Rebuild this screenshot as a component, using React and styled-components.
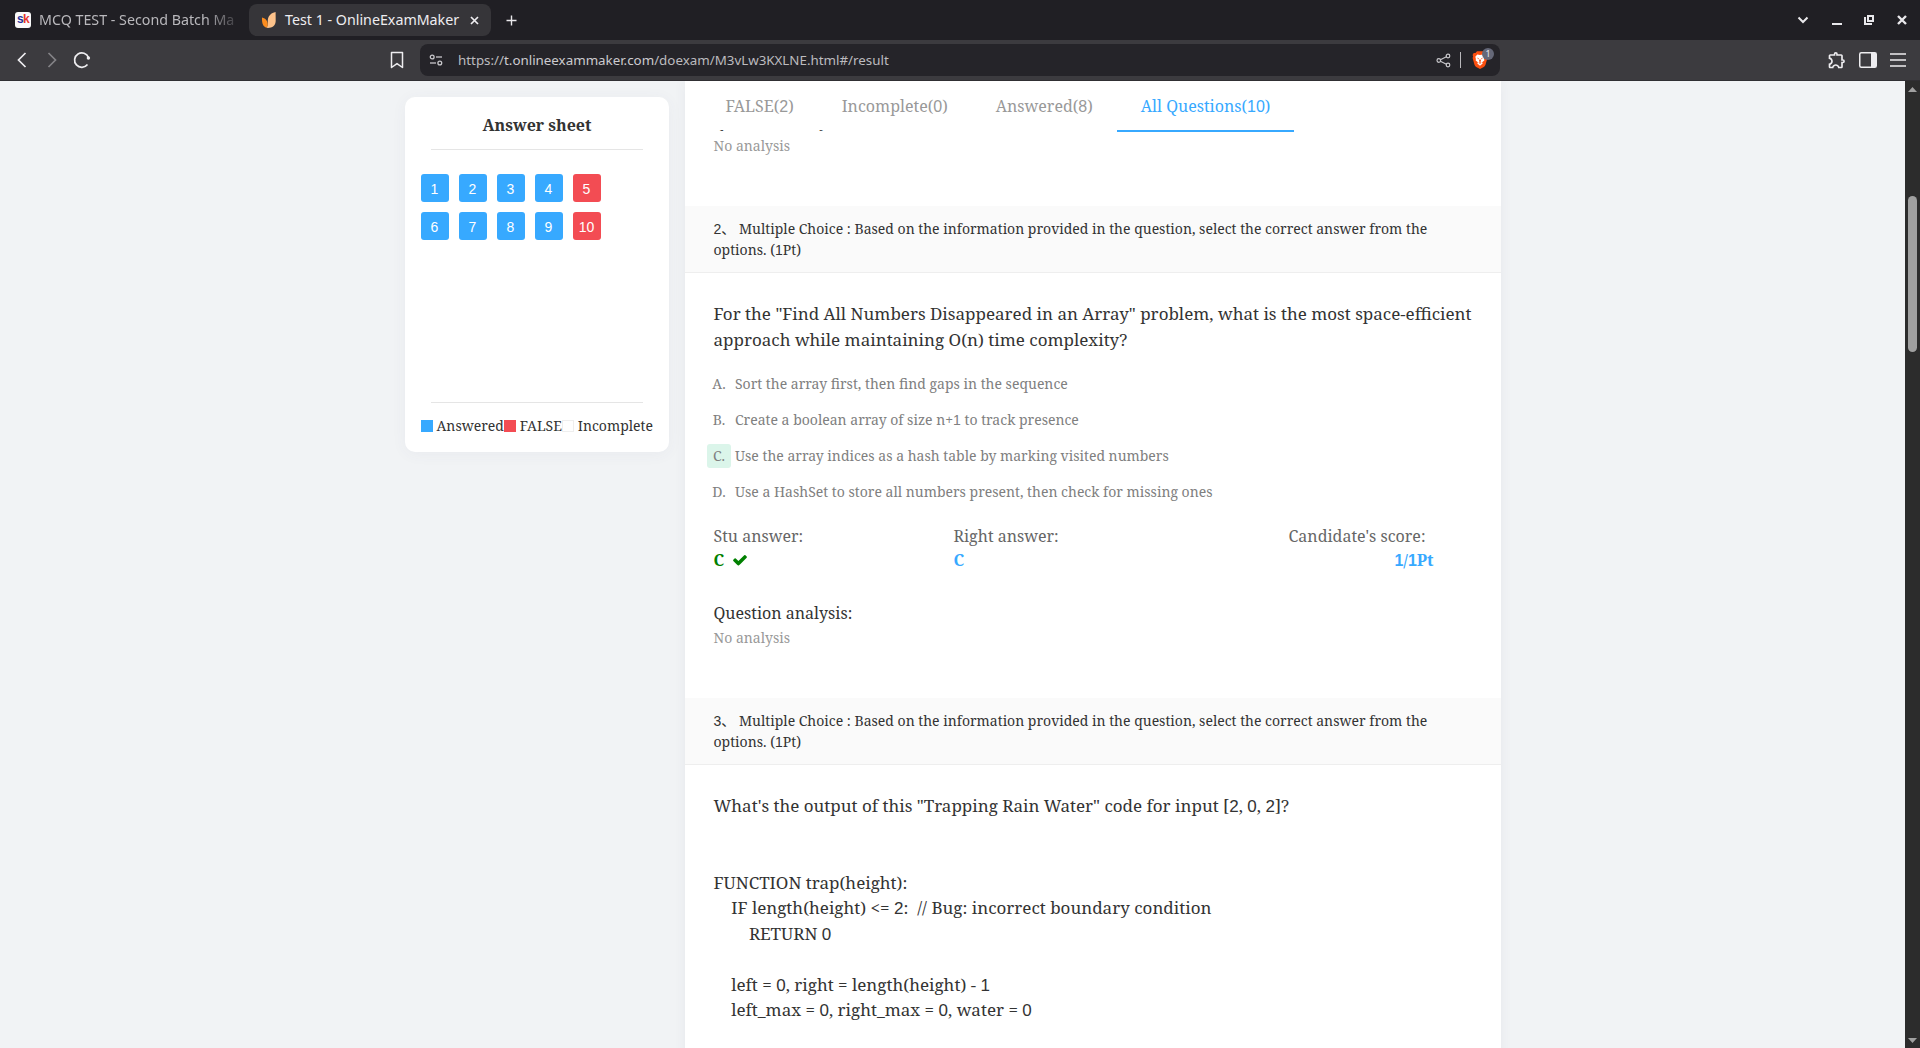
import React from 'react';
import styled, { createGlobalStyle, css } from 'styled-components';
import { MdOutlineExtension } from 'react-icons/md';

const SERIF = '"Noto Serif", "Noto Sans CJK SC", serif';
const UI = '"Noto Sans", sans-serif';
const BLUE = '#37a9ff';
const RED = '#f34c53';
const PAGE = '#f1f3f5';

const GlobalStyle = createGlobalStyle`
  *, *::before, *::after { box-sizing: border-box; }
  body { margin: 0; background: ${PAGE}; overflow: hidden; }
  svg { display: block; flex: none; }
`;

/* ---------- browser chrome ---------- */
const Window = styled.div`
  width: 1920px;
  height: 1048px;
  display: flex;
  flex-direction: column;
  overflow: hidden;
`;

const TabStrip = styled.div`
  height: 40px;
  flex: none;
  display: flex;
  align-items: center;
  background: #201f24;
  color: #e9e8ec;
  padding: 0 1px 0 7px;
`;

const BrowserTab = styled.div`
  width: 242px;
  height: 32px;
  display: flex;
  align-items: center;
  border-radius: 8px;
  font: 14.25px/20px ${UI};
  color: ${(p) => (p.$active ? '#eeedf0' : '#b9b8bc')};
  background: ${(p) => (p.$active ? '#363539' : 'transparent')};
  padding: ${(p) => (p.$active ? '0 12px 0 12px' : '0 12px 0 8px')};
`;

const TabTitle = styled.span`
  flex: 1;
  margin: -1px 0 0 8px;
  white-space: nowrap;
  ${(p) =>
    p.$fade &&
    css`
      mask-image: linear-gradient(to right, #000 166px, rgba(0, 0, 0, 0.1) 200px);
    `}
`;

const SkIcon = styled.span`
  width: 16px;
  height: 16px;
  border-radius: 3px;
  background: #fafafa;
  color: #27309b;
  font: 700 12px/15px "Liberation Sans", sans-serif;
  letter-spacing: -0.6px;
  text-align: center;
  b { color: #e8352c; }
`;

const NewTab = styled.span`
  margin-left: 15px;
`;

const WindowButtons = styled.div`
  margin-left: auto;
  display: flex;
  align-items: center;
  padding-bottom: 1px;
`;

const WinButton = styled.span`
  width: ${(p) => p.$w}px;
  display: flex;
  justify-content: center;
`;

const Toolbar = styled.div`
  height: 41px;
  flex: none;
  display: flex;
  align-items: center;
  background: #3c3b3f;
  border-bottom: 1px solid #302f33;
  color: #eeedf0;
  padding: 0 13px 0 12px;
`;

const NavButton = styled.span`
  width: 20px;
  margin-right: 10px;
  display: flex;
  justify-content: center;
  opacity: ${(p) => (p.$off ? 0.4 : 1)};
`;

const BookmarkButton = styled.span`
  width: 20px;
  display: flex;
  justify-content: center;
  margin-left: 285px;
`;

const AddressBar = styled.div`
  width: 1080px;
  height: 32px;
  margin-left: 13px;
  display: flex;
  align-items: center;
  border-radius: 8px;
  background: #252429;
  padding: 0 11px 0 9px;
  color: #c9c8cc;
`;

const Url = styled.span`
  flex: 1;
  margin-left: 15px;
  font: 13.35px ${UI};
  color: #bcbbbf;
  b { font-weight: 400; color: #cccbcf; }
`;

const Divider = styled.i`
  width: 1px;
  height: 16px;
  margin: 0 10px 0 9px;
  background: #b9b8bc;
`;

const Shield = styled.span`
  position: relative;
  display: flex;
  width: 18px;
  height: 20px;
  align-items: center;
  justify-content: center;
`;

const Badge = styled.span`
  position: absolute;
  left: 11px;
  top: -2px;
  width: 12px;
  height: 12px;
  border-radius: 6px;
  background: #656878;
  color: #e6e6ec;
  font: 9px/12px ${UI};
  text-align: center;
`;

const ToolbarEnd = styled.div`
  margin-left: auto;
  display: flex;
  align-items: center;
  gap: 12px;
`;

/* ---------- page ---------- */
const Viewport = styled.div`
  flex: 1;
  min-height: 0;
  display: flex;
  overflow: hidden;
  background: ${PAGE};
  color: #333;
  font-family: ${SERIF};
`;

const Content = styled.div`
  flex: 1;
  display: flex;
  align-items: flex-start;
  gap: 16px;
  padding-left: 405px;
  min-width: 0;
`;

const Sheet = styled.aside`
  width: 264px;
  height: 355px;
  margin-top: 16px;
  padding: 16px 16px 10px;
  display: flex;
  flex-direction: column;
  border-radius: 10px;
  background: #fff;
  box-shadow: 0 2px 15px rgba(70, 70, 110, 0.05);
`;

const SheetTitle = styled.h2`
  margin: 0 10px;
  height: 37px;
  border-bottom: 1px solid #e5e5e5;
  font-size: 16px;
  font-weight: 700;
  line-height: 24px;
  text-align: center;
`;

const NumberGrid = styled.div`
  flex: 1;
  display: grid;
  grid-template-columns: repeat(6, 28px);
  grid-auto-rows: 28px;
  gap: 10px;
  padding-top: 24px;
`;

const NumberBox = styled.span`
  padding-right: 1px;
  border-radius: 3px;
  background: ${(p) => (p.$wrong ? RED : BLUE)};
  color: #fff;
  font-size: 14px;
  line-height: 29px;
  text-align: center;
`;

const Legend = styled.div`
  display: flex;
  justify-content: space-between;
  height: 40px;
  margin-bottom: -1px;
  padding-top: 12px;
  font-size: 14px;
  line-height: 22px;
`;

const LegendRule = styled.div`
  height: 1px;
  margin: 0 10px;
  background: #e5e5e5;
`;

const LegendItem = styled.span`
  display: flex;
  align-items: center;
  gap: 3.5px;
  white-space: nowrap;
  height: 22px;
  &::before {
    content: '';
    width: 12px;
    height: 12px;
    background: ${(p) => p.$color};
    border: ${(p) => (p.$outlined ? '1px solid #eee' : '0')};
  }
`;

const Paper = styled.main`
  width: 816px;
  min-height: 100%;
  padding-bottom: 24px;
  background: #fff;
  box-shadow: 0 0 12px rgba(70, 70, 110, 0.06);
`;

const FilterBar = styled.nav`
  position: relative;
  z-index: 1;
  height: 49px;
  display: flex;
  padding-left: 16.5px;
  background: #fff;
`;

const Filter = styled.span`
  height: 51px;
  padding: 13px 24px 0;
  font-size: 16px;
  line-height: 24px;
  color: ${(p) => (p.$active ? BLUE : '#999')};
  border-bottom: 2px solid ${(p) => (p.$active ? BLUE : 'transparent')};
`;

const Analysis = styled.div`
  height: 97px;
  padding-left: 28.5px;
  margin-top: ${(p) => p.$tuck || 0}px;
`;

const AnalysisTitle = styled.div`
  font-size: 16px;
  line-height: 24px;
`;

const AnalysisText = styled.div`
  margin-top: 2px;
  font-size: 14px;
  line-height: 21px;
  color: #999;
`;

const QuestionHead = styled.div`
  height: 67px;
  padding: 12px 28.5px;
  background: #fafafa;
  border-bottom: 1px solid #eee;
  font-size: 14px;
  line-height: 21px;
`;

const Stem = styled.div`
  margin: 28px 20px 20px 28.5px;
  font-size: 17px;
  line-height: 25.5px;
  white-space: pre-wrap;
`;

const Options = styled.div`
  display: flex;
  flex-direction: column;
  gap: 12px;
  padding-left: 22px;
`;

const Option = styled.div`
  display: flex;
  gap: 4px;
  font-size: 14px;
  line-height: 24px;
  color: #808080;
`;

const Letter = styled.span`
  width: 24px;
  height: 24px;
  border-radius: 3px;
  text-align: center;
  background: ${(p) => (p.$picked ? '#dbf5ea' : 'transparent')};
`;

const Results = styled.div`
  display: grid;
  grid-template-columns: repeat(3, 240px);
  padding: 19.5px 0 0 28.5px;
  height: 97px;
`;

const Result = styled.div`
  font-size: 16px;
  line-height: 24px;
  color: #666;
  text-align: ${(p) => (p.$end ? 'right' : 'left')};
`;

const ResultLabel = styled.div`
  padding-right: 8px;
`;

const ResultValue = styled.div`
  display: ${(p) => (p.$flex ? 'flex' : 'block')};
  align-items: center;
  gap: 8px;
  font-weight: 700;
  color: ${(p) => p.$color};
`;

const Digits = styled.span`
  font-family: 'Liberation Sans', sans-serif;
  line-height: 1;
`;

const ScrollTrack = styled.div`
  width: 15px;
  flex: none;
  display: flex;
  flex-direction: column;
  align-items: center;
  padding: 6px 0 5px;
  background: #2c2c2c;
`;

const ScrollThumb = styled.div`
  width: 9px;
  height: 156px;
  margin-top: 104px;
  margin-bottom: auto;
  border-radius: 4.5px;
  background: #a0a0a0;
`;

/* Sets every run of digits in the sans-serif numeral face. */
const T = ({ children }) =>
  String(children)
    .split(/(\d+)/)
    .map((part, i) => (i % 2 ? <Digits key={i}>{part}</Digits> : part));

const Stroke = ({ w = 16, h = w, sw = 1.5, children }) => (
  <svg width={w} height={h} viewBox={`0 0 ${w} ${h}`} fill="none" stroke="currentColor" strokeWidth={sw}>
    {children}
  </svg>
);

const Check = () => (
  <svg width="16" height="16" viewBox="0 0 1792 1792" fill="green">
    <path d="M1671 566q0 40-28 68l-724 724-136 136q-28 28-68 28t-68-28l-136-136-362-362q-28-28-28-68t28-68l136-136q28-28 68-28t68 28l294 295 656-657q28-28 68-28t68 28l136 136q28 28 28 68z" />
  </svg>
);

const Lion = () => (
  <svg width="16" height="18" viewBox="0 0 16 18">
    <path d="M5 .3h6l1.600 1.700 1.700-.1L15.400 4l-.5 1.500.5 1.500-1.900 6.800c-.3 1-.9 1.600-1.700 2.200L8 18l-3.800-2c-.8-.6-1.400-1.200-1.700-2.200L.6 7l.5-1.500L.6 4l1.100-2.100 1.700.1z" fill="#fb4f10" />
    <path d="M5.300 3.400L8 3.900l2.700-.5 2 2.300-.6 2.200.2 1.600-2.200 1.700.6 1.200L8 14.800l-2.700-2.400.6-1.200-2.200-1.700.2-1.600-.6-2.200z" fill="#fff" />
    <path d="M4.700 6.600l2 .7.100 1.100zM11.300 6.600l-2 .7-.1 1.100zM7.300 8.600h1.400l.3 1.700-1 .6-1-.6zM6.300 11.800L8 11.200l1.700.6L8 12.700z" fill="#fb4f10" />
  </svg>
);

const HEAD = 'Multiple Choice : Based on the information provided in the question, select the correct answer from the options. (1Pt)';

const OPTIONS = [
  ['A', 'Sort the array first, then find gaps in the sequence'],
  ['B', 'Create a boolean array of size n+1 to track presence'],
  ['C', 'Use the array indices as a hash table by marking visited numbers'],
  ['D', 'Use a HashSet to store all numbers present, then check for missing ones'],
];

const CODE = `What's the output of this "Trapping Rain Water" code for input [2, 0, 2]?


FUNCTION trap(height):
    IF length(height) <= 2:  // Bug: incorrect boundary condition
        RETURN 0

    left = 0, right = length(height) - 1
    left_max = 0, right_max = 0, water = 0`;

const FILTERS = ['FALSE(2)', 'Incomplete(0)', 'Answered(8)', 'All Questions(10)'];

const Head = ({ n }) => (
  <QuestionHead>
    <T>{`${n}、 ${HEAD}`}</T>
  </QuestionHead>
);

const AnalysisBlock = ({ tuck }) => (
  <Analysis $tuck={tuck}>
    <AnalysisTitle>Question analysis:</AnalysisTitle>
    <AnalysisText>No analysis</AnalysisText>
  </Analysis>
);

const Chrome = () => (
  <>
    <TabStrip>
      <BrowserTab>
        <SkIcon>s<b>k</b></SkIcon>
        <TabTitle $fade>MCQ TEST - Second Batch Ma</TabTitle>
      </BrowserTab>
      <BrowserTab $active>
        <svg width="16" height="16" viewBox="0 0 16 16">
          <path d="M14.600 0C10 1 6.400 4 6.800 10c.1 2.500-.3 4.500-1.300 5.800 5 .6 9.100-1.800 9.200-6.800z" fill="#fdc28a" />
          <path d="M1 5.500c4 1 6 4 5.700 7.200-.1 1.300-.5 2.300-1.200 3.100C2.300 14.800.7 11.500 1 5.500z" fill="#fb8c1e" />
        </svg>
        <TabTitle>Test 1 - OnlineExamMaker</TabTitle>
        <Stroke w={9} sw={1.7}><path d="M1 1l7 7M8 1l-7 7" /></Stroke>
      </BrowserTab>
      <NewTab><Stroke w={11} sw={1.4}><path d="M5.500 .5v10M.5 5.500h10" /></Stroke></NewTab>
      <WindowButtons>
        <WinButton $w={34}><Stroke w={12} sw={2}><path d="M1.500 3.500L6 8l4.500-4.500" /></Stroke></WinButton>
        <WinButton $w={34}><Stroke w={10} sw={2}><path d="M0 9h10" /></Stroke></WinButton>
        <WinButton $w={30}><Stroke w={10} sw={2}><path d="M4 1h5v5H4zM1 2v7h7" /></Stroke></WinButton>
        <WinButton $w={35}><Stroke w={10} sw={2.4}><path d="M1 1l8 8M9 1L1 9" /></Stroke></WinButton>
      </WindowButtons>
    </TabStrip>
    <Toolbar>
      <NavButton><Stroke w={16} sw={1.7}><path d="M11.500 1L4.500 8l7 7" /></Stroke></NavButton>
      <NavButton $off><Stroke w={16} sw={1.7}><path d="M4.500 1l7 7-7 7" /></Stroke></NavButton>
      <NavButton>
        <Stroke w={18} sw={1.7}>
          <path d="M14.500 13.500a7.200 7.200 0 1 1 1-7" />
          <circle cx="15.400" cy="7" r="1.700" fill="currentColor" stroke="none" />
        </Stroke>
      </NavButton>
      <BookmarkButton>
        <Stroke w={14} h={18}><path d="M1.500 1.500h11v15L7 12.600l-5.500 3.900z" strokeLinejoin="round" /></Stroke>
      </BookmarkButton>
      <AddressBar>
        <Stroke w={14} h={12} sw={1.3}>
          <circle cx="3.200" cy="3" r="1.900" /><path d="M7 3h6" />
          <circle cx="10.800" cy="9" r="1.900" /><path d="M1 9h6" />
        </Stroke>
        <Url>https://<b>t.onlineexammaker.com</b>/doexam/M3vLw3KXLNE.html#/result</Url>
        <Stroke w={15} sw={1.2}>
          <circle cx="2.800" cy="7.500" r="1.800" /><circle cx="12" cy="3" r="1.800" /><circle cx="12" cy="12" r="1.800" />
          <path d="M4.400 6.700l6-2.900M4.400 8.300l6 2.900" />
        </Stroke>
        <Divider />
        <Shield><Lion /><Badge>1</Badge></Shield>
      </AddressBar>
      <ToolbarEnd>
        <MdOutlineExtension size={20} />
        <svg width="18" height="16" viewBox="0 0 18 16">
          <rect x=".75" y=".75" width="16.500" height="14.500" rx="1.500" fill="none" stroke="currentColor" strokeWidth="1.500" />
          <path d="M12 1h5v14h-5z" fill="currentColor" />
        </svg>
        <Stroke w={18} h={14}><path d="M1 1h16M1 7h16M1 13h16" /></Stroke>
      </ToolbarEnd>
    </Toolbar>
  </>
);

export default function App() {
  return (
    <Window>
      <GlobalStyle />
      <Chrome />
      <Viewport>
        <Content>
          <Sheet>
            <SheetTitle>Answer sheet</SheetTitle>
            <NumberGrid>
              {[1, 2, 3, 4, 5, null, 6, 7, 8, 9, 10].map((n, i) =>
                n ? <NumberBox key={i} $wrong={n % 5 === 0}><T>{n}</T></NumberBox> : <span key={i} />
              )}
            </NumberGrid>
            <LegendRule />
            <Legend>
              <LegendItem $color={BLUE}>Answered</LegendItem>
              <LegendItem $color={RED}>FALSE</LegendItem>
              <LegendItem $color="#fff" $outlined>Incomplete</LegendItem>
            </Legend>
          </Sheet>
          <Paper>
            <FilterBar>
              {FILTERS.map((f, i) => (
                <Filter key={f} $active={i === 3}><T>{f}</T></Filter>
              ))}
            </FilterBar>
            <AnalysisBlock tuck={-21} />
            <Head n={2} />
            <Stem>{'For the "Find All Numbers Disappeared in an Array" problem, what is the most space-efficient approach while maintaining O(n) time complexity?'}</Stem>
            <Options>
              {OPTIONS.map(([k, text]) => (
                <Option key={k}>
                  <Letter $picked={k === 'C'}>{k}.</Letter>
                  <span><T>{text}</T></span>
                </Option>
              ))}
            </Options>
            <Results>
              <Result>
                <ResultLabel>Stu answer:</ResultLabel>
                <ResultValue $flex $color="green">C<Check /></ResultValue>
              </Result>
              <Result>
                <ResultLabel>Right answer:</ResultLabel>
                <ResultValue $color={BLUE}>C</ResultValue>
              </Result>
              <Result $end>
                <ResultLabel>Candidate's score:</ResultLabel>
                <ResultValue $color={BLUE}><T>1/1Pt</T></ResultValue>
              </Result>
            </Results>
            <AnalysisBlock />
            <Head n={3} />
            <Stem><T>{CODE}</T></Stem>
          </Paper>
        </Content>
        <ScrollTrack>
          <svg width="9" height="5" viewBox="0 0 9 5"><path d="M4.500 0L9 5H0z" fill="#a0a0a0" /></svg>
          <ScrollThumb />
          <svg width="9" height="5" viewBox="0 0 9 5"><path d="M4.500 5L0 0h9z" fill="#a0a0a0" /></svg>
        </ScrollTrack>
      </Viewport>
    </Window>
  );
}
